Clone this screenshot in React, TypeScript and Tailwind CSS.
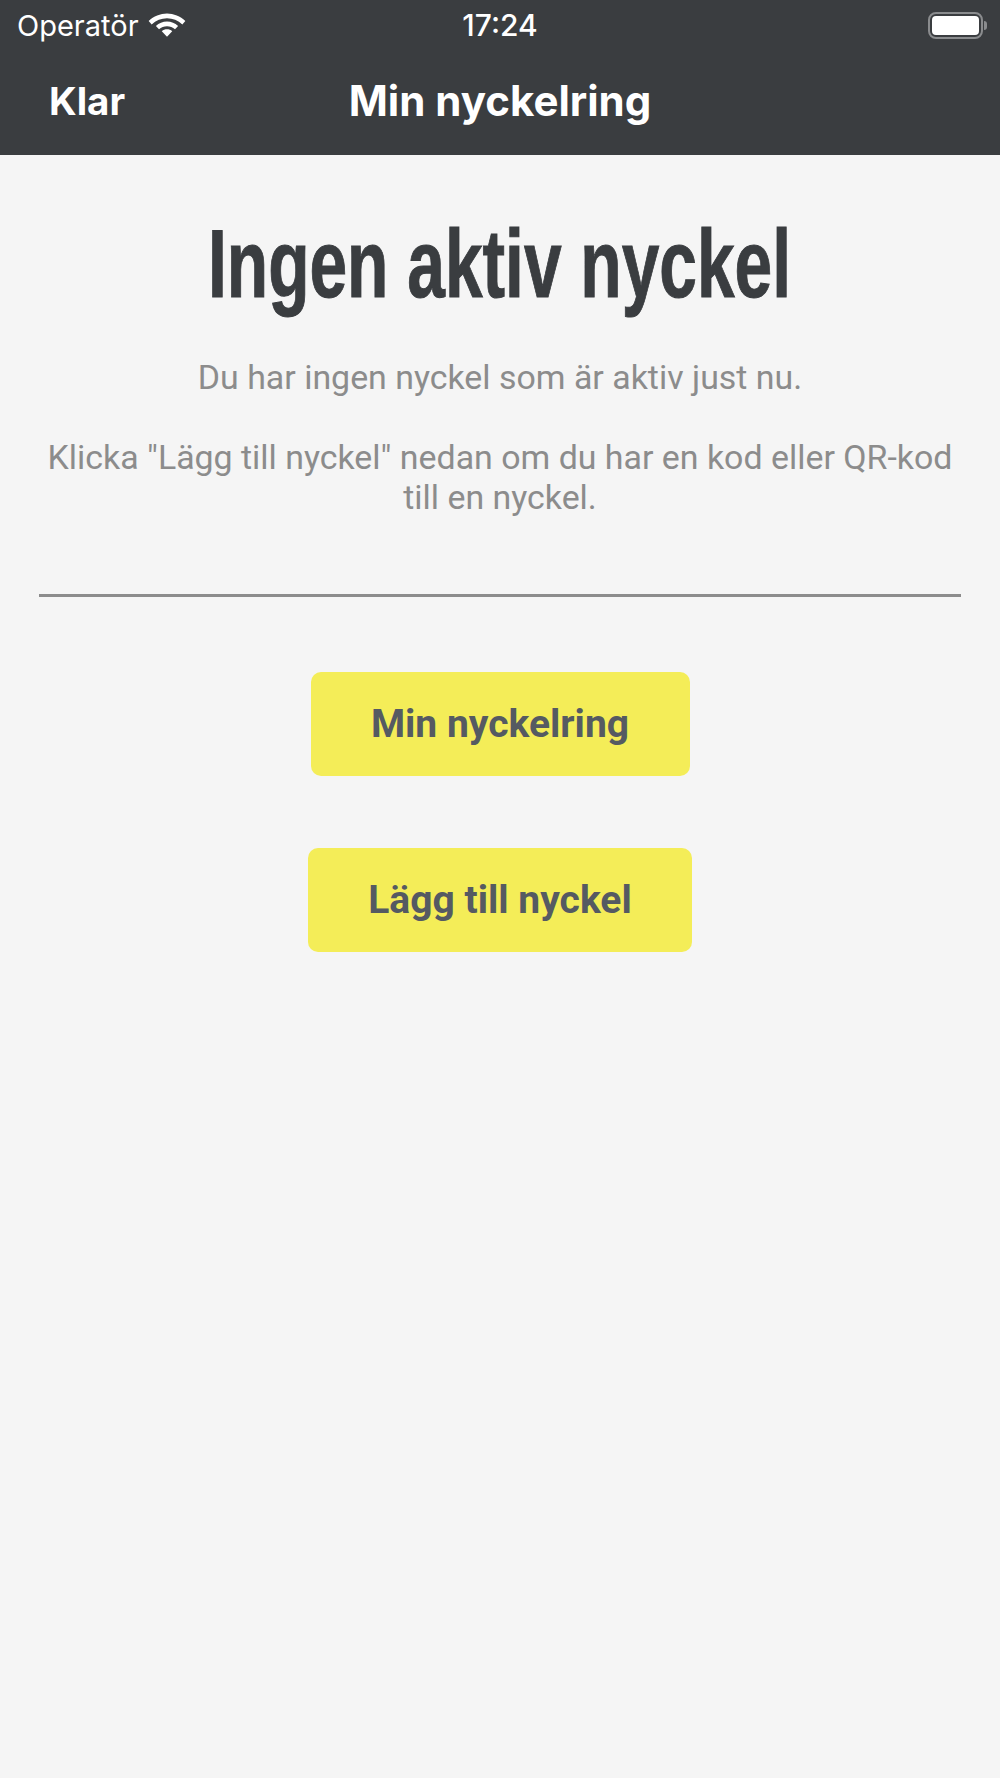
export default function App() {
  return (
    <div className="min-h-[1778px] bg-[#f5f5f5] flex flex-col font-['Roboto',sans-serif]">
      <header className="bg-[#3a3d40] h-[155px] text-white flex flex-col shrink-0">
        <div className="relative h-[50px] flex items-center pl-[17px] pr-[13px] justify-between">
          <div className="flex items-center gap-[8px]">
            <span className="font-['Inter',sans-serif] text-[29px] leading-none">Operatör</span>
            <svg width="40" height="29" viewBox="0 0 36 26" fill="white" className="-mt-1">
              <path d="M18 4C24 4 30 6.500 34.500 10.800L31.800 13.800C28 10.200 23 8.200 18 8.200C13 8.200 8 10.200 4.200 13.800L1.500 10.800C6 6.500 12 4 18 4Z" />
              <path d="M18 11.200C21.800 11.200 25.200 12.700 28 15.200L25.200 18.200C23.200 16.500 20.700 15.500 18 15.500C15.300 15.500 12.800 16.500 10.800 18.200L8 15.200C10.800 12.700 14.200 11.200 18 11.200Z" />
              <path d="M18 18.200C19.800 18.200 21.400 18.800 22.700 19.900L18 25L13.300 19.900C14.600 18.800 16.200 18.200 18 18.200Z" />
            </svg>
          </div>
          <span className="absolute left-0 right-0 text-center font-['Inter',sans-serif] font-medium text-[30px] leading-none">17:24</span>
          <div className="flex items-center">
            <div className="w-[55px] h-[27px] rounded-[8px] border-[2px] border-[#8a8c8e] p-[2px]">
              <div className="w-full h-full bg-white rounded-[4px]" />
            </div>
            <div className="w-[3px] h-[9px] bg-[#8a8c8e] rounded-r-full ml-[1px]" />
          </div>
        </div>
        <div className="relative flex-1 flex items-center pb-[3px]">
          <span className="pl-[49px] font-['Inter',sans-serif] font-bold text-[38.500px] leading-none">Klar</span>
          <span className="absolute left-0 right-0 text-center font-['Inter',sans-serif] font-bold text-[42px] leading-none">Min nyckelring</span>
        </div>
      </header>
      <main className="flex flex-col items-center px-[39px]">
        <h1 className="mt-[57px] h-[104px] flex justify-center">
          <span className="inline-block whitespace-nowrap scale-x-[0.705] font-['Liberation_Sans',sans-serif] font-bold text-[96px] leading-[104px] text-[#3a3d40] [-webkit-text-stroke:1px_#3a3d40]">Ingen aktiv nyckel</span>
        </h1>
        <p className="mt-[43px] text-[33.900px] leading-[38px] text-[#8c8c8c] text-center whitespace-nowrap">Du har ingen nyckel som är aktiv just nu.</p>
        <p className="mt-[41px] text-[33.900px] leading-[40px] text-[#8c8c8c] text-center w-full whitespace-nowrap">Klicka "Lägg till nyckel" nedan om du har en kod eller QR-kod<br />till en nyckel.</p>
        <div className="w-full h-[3px] bg-[#8c8c8c] mt-[76px]" />
        <button className="mt-[75px] w-[379px] h-[104px] rounded-[10px] bg-[#f4ed58] text-[#555a62] font-bold text-[39px]">Min nyckelring</button>
        <button className="mt-[72px] w-[384px] h-[104px] rounded-[10px] bg-[#f4ed58] text-[#555a62] font-bold text-[39px]">Lägg till nyckel</button>
      </main>
    </div>
  );
}
